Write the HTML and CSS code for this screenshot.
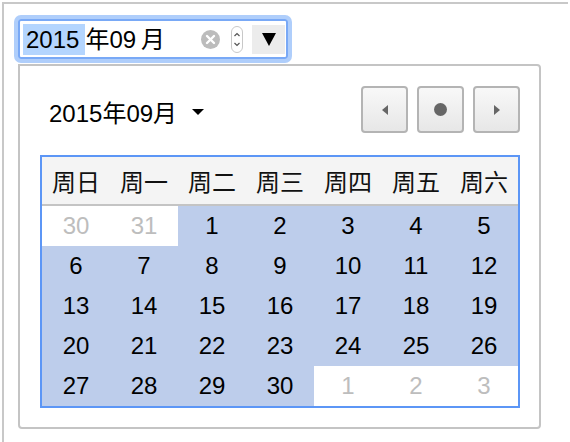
FILE: index.html
```html
<!DOCTYPE html>
<html lang="zh-CN">
<head>
    <meta charset="UTF-8">
    <title>日期选择</title>
    <link rel="stylesheet" href="styles.css">
</head>
<body>
    <div class="frame">
        <div class="date-field">
            <span class="seg sel">2015</span>
            <span class="seg">年</span>
            <span class="seg">09</span>
            <span class="seg unit">月</span>
            <span class="clear">
                <svg width="19" height="19" viewBox="0 0 19 19">
                    <circle cx="9.5" cy="9.5" r="9.5" fill="#bcbcbc"/>
                    <path d="M6 6 L13 13 M13 6 L6 13" stroke="#fff" stroke-width="2.4" stroke-linecap="round"/>
                </svg>
            </span>
            <span class="spin">
                <svg width="12" height="27" viewBox="0 0 12 27">
                    <rect x="0.5" y="0.5" width="11" height="26" rx="5.5" fill="#fff" stroke="#c8c8c8"/>
                    <path d="M3.5 10 L6 7.5 L8.5 10" fill="none" stroke="#555" stroke-width="1.2"/>
                    <path d="M3.5 17 L6 19.5 L8.5 17" fill="none" stroke="#555" stroke-width="1.2"/>
                </svg>
            </span>
            <span class="drop"><span class="drop-arrow"></span></span>
        </div>

        <div class="picker">
            <div class="picker-head">
                <div class="month-label">2015年09月<span class="caret"></span></div>
                <div class="nav">
                    <button class="nav-btn"><span class="tri-left"></span></button>
                    <button class="nav-btn"><span class="dot"></span></button>
                    <button class="nav-btn"><span class="tri-right"></span></button>
                </div>
            </div>
            <div class="month">
                <table>
                    <thead>
                        <tr><th>周日</th><th>周一</th><th>周二</th><th>周三</th><th>周四</th><th>周五</th><th>周六</th></tr>
                    </thead>
                    <tbody>
                        <tr><td class="other">30</td><td class="other">31</td><td>1</td><td>2</td><td>3</td><td>4</td><td>5</td></tr>
                        <tr><td>6</td><td>7</td><td>8</td><td>9</td><td>10</td><td>11</td><td>12</td></tr>
                        <tr><td>13</td><td>14</td><td>15</td><td>16</td><td>17</td><td>18</td><td>19</td></tr>
                        <tr><td>20</td><td>21</td><td>22</td><td>23</td><td>24</td><td>25</td><td>26</td></tr>
                        <tr><td>27</td><td>28</td><td>29</td><td>30</td><td class="other">1</td><td class="other">2</td><td class="other">3</td></tr>
                    </tbody>
                </table>
            </div>
        </div>
    </div>
</body>
</html>
```

FILE: styles.css
```css
body {
    margin: 0;
    background-color: #fff;
    font-family: 'Liberation Sans', Arial, 'Noto Sans CJK SC', sans-serif;
    color: #000;
}
.frame {
    margin: 2px 0 0 2px;
    width: 566px;
    height: 440px;
    box-sizing: border-box;
    border-top: 2px solid #c8c8c8;
    border-left: 2px solid #c8c8c8;
    padding: 15px 0 0 14px;
}
.date-field {
    display: flex;
    align-items: center;
    width: 270px;
    height: 40px;
    box-sizing: border-box;
    border: 2px solid #79a9f6;
    border-radius: 3px;
    box-shadow: 0 0 0 4px #afcefb;
    padding-left: 3px;
    font-size: 24px;
}
.seg {
    line-height: 31px;
}
.seg.sel {
    background-color: #b4d5fe;
    padding: 0 6px 0 3px;
}
.seg.unit {
    margin-left: 5px;
}
.clear {
    margin-left: auto;
    display: flex;
}
.spin {
    margin-left: 11px;
    display: flex;
}
.drop {
    margin-left: 9px;
    margin-right: 1px;
    width: 33px;
    height: 29px;
    background-color: #ececec;
    display: flex;
    align-items: center;
    justify-content: center;
}
.drop-arrow {
    width: 0;
    height: 0;
    border-left: 7px solid transparent;
    border-right: 7px solid transparent;
    border-top: 13px solid #000;
}
.picker {
    margin-top: 5px;
    width: 523px;
    height: 365px;
    box-sizing: border-box;
    border: 2px solid #c4c4c4;
    border-radius: 0 4px 4px 4px;
    padding: 20px 19px 20px 20px;
}
.picker-head {
    display: flex;
    justify-content: space-between;
    align-items: center;
    height: 47px;
    margin-bottom: 22px;
}
.month-label {
    display: flex;
    align-items: center;
    padding-left: 9px;
    padding-top: 4px;
    font-size: 24px;
}
.caret {
    margin-left: 15px;
    width: 0;
    height: 0;
    border-left: 6px solid transparent;
    border-right: 6px solid transparent;
    border-top: 6px solid #000;
}
.nav {
    display: flex;
    gap: 9px;
}
.nav-btn {
    width: 47px;
    height: 47px;
    padding: 0;
    border: 2px solid #b4b4b4;
    border-radius: 4px;
    background: linear-gradient(#f8f8f8, #e7e7e7);
    display: flex;
    align-items: center;
    justify-content: center;
}
.tri-left {
    width: 0;
    height: 0;
    border-top: 5px solid transparent;
    border-bottom: 5px solid transparent;
    border-right: 6px solid #666;
}
.tri-right {
    width: 0;
    height: 0;
    border-top: 5px solid transparent;
    border-bottom: 5px solid transparent;
    border-left: 6px solid #666;
}
.dot {
    width: 13px;
    height: 13px;
    border-radius: 50%;
    background-color: #666;
}
.month {
    width: 480px;
    box-sizing: border-box;
    border: 2px solid #5c96f6;
}
.month table {
    width: 100%;
    border-spacing: 0;
    table-layout: fixed;
}
.month th {
    height: 47px;
    padding: 0;
    background-color: #f4f4f4;
    border-bottom: 2px solid #c4c4c4;
    font-weight: normal;
    font-size: 24px;
    color: #111;
}
.month td {
    height: 40px;
    padding: 0;
    text-align: center;
    font-size: 24px;
    background-color: #bdcdeb;
}
.month td.other {
    background-color: #fff;
    color: #bdbdbd;
}
```
